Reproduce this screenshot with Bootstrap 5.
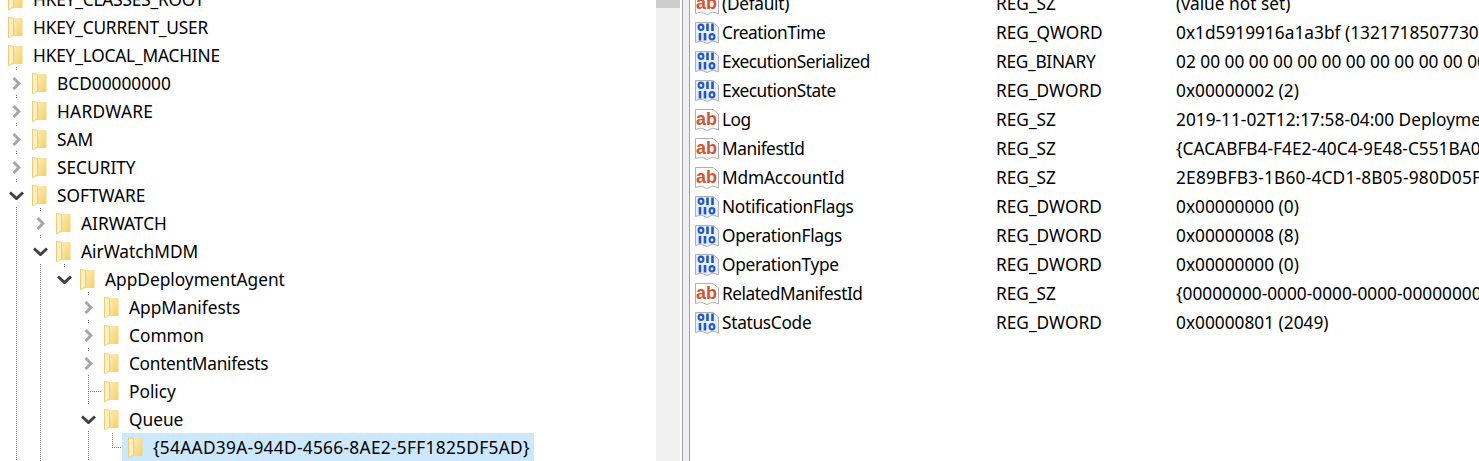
<!DOCTYPE html>
<html lang="en">
<head>
<meta charset="utf-8">
<title>Registry Editor</title>
<link href="https://cdn.jsdelivr.net/npm/bootstrap@5.3.0/dist/css/bootstrap.min.css" rel="stylesheet">
<style>
html,body{height:461px;overflow:hidden;background:#fff}
body{font-family:"Noto Sans","Open Sans",sans-serif;font-size:17.3px;color:#000;line-height:1}
.reg-shell{height:461px;overflow:hidden}
.tree-pane{width:656px;flex:none;position:relative;overflow:hidden;margin-top:-15px;height:476px}
.tree-row{height:28px;white-space:nowrap}
.twisty{width:32px;margin-left:-24px;flex:none;display:flex;justify-content:center;align-items:center}
.fold{width:15px;height:21px;flex:none;margin-right:10px;margin-top:1px}
.lbl{padding-top:2px}
.lv0{padding-left:0}.lv1{padding-left:24px}.lv2{padding-left:48px}.lv3{padding-left:72px}.lv4{padding-left:96px}.lv5{padding-left:120px}
.sel-wrap{background:#cce8ff;height:28px;margin-left:-6px;padding-left:6px;padding-right:4px}
.guides{position:absolute;left:0;top:15px;pointer-events:none}
.scroll-track{width:24px;flex:none;background:#f0f0f0;height:461px}
.scroll-thumb{height:8px;background:#cdcdcd}
.sash{width:8px;flex:none;height:461px;margin-left:2px;border-left:1px solid #a0a0a8;border-right:1px solid #a0a0a8;background:#f0f0f0}
.list-pane{flex:1;margin-top:-11px;min-width:0;overflow:hidden}
.list-row{height:29px;white-space:nowrap}
.list-row .lbl{padding-top:0}
.col-name{width:306px;flex:none;padding-left:5px}
.val-ico{width:24px;height:22px;flex:none;margin-right:3px}
.col-type{width:180px;flex:none}
.col-data{flex:none}
.sq5{letter-spacing:-.47px}
.sq3{letter-spacing:-.3px}
.sq2{letter-spacing:-.18px}
.wd3{letter-spacing:.3px}
.wd2{letter-spacing:.2px}
</style>
</head>
<body>
<svg width="0" height="0" class="position-absolute">
<defs>
<linearGradient id="fg" x1="0" x2="1" y1="0" y2="1"><stop offset="0" stop-color="#fdeeb0"/><stop offset="1" stop-color="#f4cd6c"/></linearGradient>
<symbol id="folder" viewBox="0 0 15 21">
<path d="M5 1H14.500V19H5Z" fill="url(#fg)"/>
<path d="M0.500 0.500L5.500 1.500V18L1.500 20.500H0.500Z" fill="#fdf1c4" stroke="#ebcb78" stroke-width="1"/>
</symbol>
<symbol id="closed" viewBox="0 0 9 13"><path d="M1.500 1L7 6.500L1.500 12" fill="none" stroke="#a6a6a6" stroke-width="3"/></symbol>
<symbol id="open" viewBox="0 0 15 9"><path d="M1 1.500L7.500 7.500L14 1.500" fill="none" stroke="#404040" stroke-width="3"/></symbol>
<symbol id="ab" viewBox="0 0 24 22">
<path d="M0.500 0.500H18L23.500 5V21L18 19L12 21.500L6 19L0.500 20.500Z" fill="#fff" stroke="#b0b0b0"/>
<text x="11.500" y="15.500" text-anchor="middle" font-family="Liberation Sans,sans-serif" font-weight="700" font-size="18" fill="#d9532e">ab</text>
</symbol>
<symbol id="bin" viewBox="0 0 24 22">
<path d="M0.500 0.500H18L23.500 5V21L18 19L12 21.500L6 19L0.500 20.500Z" fill="#e6eefc" stroke="#b0b0b0"/>
<path d="M12.500 1.500V9M17.500 1.500V9M5 11V18.500M10 11V18.500" stroke="#2258c4" stroke-width="2.600" fill="none"/>
<ellipse cx="6" cy="5.300" rx="2.400" ry="2.700" fill="none" stroke="#2258c4" stroke-width="2.100"/>
<ellipse cx="17" cy="14.800" rx="2.400" ry="2.700" fill="none" stroke="#2258c4" stroke-width="2.100"/>
</symbol>
</defs>
</svg>
<div class="reg-shell d-flex">
<div class="tree-pane">
<svg class="guides" width="656" height="461" fill="none" stroke="#777" stroke-dasharray="1 1">
<path d="M16.500 67V71M16.500 95V99M16.500 123V127M16.500 151V155M16.500 179V183M16.500 207V461M40.500 208V212M40.500 235V239M40.500 264V461M64.500 264V268M88.500 292V296M88.500 320V324M88.500 348V352M88.500 375V405M88 391.500H102M88.500 431V461M112.500 433V447M112 447.500H122"/>
</svg>
<div class="tree-row lv0 d-flex align-items-center"><span class="twisty"></span><svg class="fold"><use href="#folder"/></svg><span class="lbl sq2">HKEY_CLASSES_ROOT</span></div>
<div class="tree-row lv0 d-flex align-items-center"><span class="twisty"></span><svg class="fold"><use href="#folder"/></svg><span class="lbl sq2">HKEY_CURRENT_USER</span></div>
<div class="tree-row lv0 d-flex align-items-center"><span class="twisty"></span><svg class="fold"><use href="#folder"/></svg><span class="lbl sq2">HKEY_LOCAL_MACHINE</span></div>
<div class="tree-row lv1 d-flex align-items-center"><span class="twisty"><svg width="9" height="13"><use href="#closed"/></svg></span><svg class="fold"><use href="#folder"/></svg><span class="lbl">BCD00000000</span></div>
<div class="tree-row lv1 d-flex align-items-center"><span class="twisty"><svg width="9" height="13"><use href="#closed"/></svg></span><svg class="fold"><use href="#folder"/></svg><span class="lbl wd3">HARDWARE</span></div>
<div class="tree-row lv1 d-flex align-items-center"><span class="twisty"><svg width="9" height="13"><use href="#closed"/></svg></span><svg class="fold"><use href="#folder"/></svg><span class="lbl">SAM</span></div>
<div class="tree-row lv1 d-flex align-items-center"><span class="twisty"><svg width="9" height="13"><use href="#closed"/></svg></span><svg class="fold"><use href="#folder"/></svg><span class="lbl">SECURITY</span></div>
<div class="tree-row lv1 d-flex align-items-center"><span class="twisty"><svg width="15" height="9"><use href="#open"/></svg></span><svg class="fold"><use href="#folder"/></svg><span class="lbl">SOFTWARE</span></div>
<div class="tree-row lv2 d-flex align-items-center"><span class="twisty"><svg width="9" height="13"><use href="#closed"/></svg></span><svg class="fold"><use href="#folder"/></svg><span class="lbl">AIRWATCH</span></div>
<div class="tree-row lv2 d-flex align-items-center"><span class="twisty"><svg width="15" height="9"><use href="#open"/></svg></span><svg class="fold"><use href="#folder"/></svg><span class="lbl">AirWatchMDM</span></div>
<div class="tree-row lv3 d-flex align-items-center"><span class="twisty"><svg width="15" height="9"><use href="#open"/></svg></span><svg class="fold"><use href="#folder"/></svg><span class="lbl">AppDeploymentAgent</span></div>
<div class="tree-row lv4 d-flex align-items-center"><span class="twisty"><svg width="9" height="13"><use href="#closed"/></svg></span><svg class="fold"><use href="#folder"/></svg><span class="lbl">AppManifests</span></div>
<div class="tree-row lv4 d-flex align-items-center"><span class="twisty"><svg width="9" height="13"><use href="#closed"/></svg></span><svg class="fold"><use href="#folder"/></svg><span class="lbl">Common</span></div>
<div class="tree-row lv4 d-flex align-items-center"><span class="twisty"><svg width="9" height="13"><use href="#closed"/></svg></span><svg class="fold"><use href="#folder"/></svg><span class="lbl sq3">ContentManifests</span></div>
<div class="tree-row lv4 d-flex align-items-center"><span class="twisty"></span><svg class="fold"><use href="#folder"/></svg><span class="lbl">Policy</span></div>
<div class="tree-row lv4 d-flex align-items-center"><span class="twisty"><svg width="15" height="9"><use href="#open"/></svg></span><svg class="fold"><use href="#folder"/></svg><span class="lbl">Queue</span></div>
<div class="tree-row lv5 d-flex align-items-center"><span class="twisty"></span><span class="sel-wrap d-flex align-items-center"><svg class="fold"><use href="#folder"/></svg><span class="lbl wd3">{54AAD39A-944D-4566-8AE2-5FF1825DF5AD}</span></span></div>
</div>
<div class="scroll-track"><div class="scroll-thumb"></div></div>
<div class="sash"></div>
<div class="list-pane">
<div class="list-row d-flex align-items-center"><div class="col-name d-flex align-items-center"><svg class="val-ico"><use href="#ab"/></svg><span class="lbl sq3">(Default)</span></div><div class="col-type lbl">REG_SZ</div><div class="col-data lbl">(value not set)</div></div>
<div class="list-row d-flex align-items-center"><div class="col-name d-flex align-items-center"><svg class="val-ico"><use href="#bin"/></svg><span class="lbl sq5">CreationTime</span></div><div class="col-type lbl">REG_QWORD</div><div class="col-data lbl">0x1d5919916a1a3bf (1321718507730</div></div>
<div class="list-row d-flex align-items-center"><div class="col-name d-flex align-items-center"><svg class="val-ico"><use href="#bin"/></svg><span class="lbl sq5">ExecutionSerialized</span></div><div class="col-type lbl sq3">REG_BINARY</div><div class="col-data lbl">02 00 00 00 00 00 00 00 00 00 00 00 00</div></div>
<div class="list-row d-flex align-items-center"><div class="col-name d-flex align-items-center"><svg class="val-ico"><use href="#bin"/></svg><span class="lbl sq5">ExecutionState</span></div><div class="col-type lbl">REG_DWORD</div><div class="col-data lbl">0x00000002 (2)</div></div>
<div class="list-row d-flex align-items-center"><div class="col-name d-flex align-items-center"><svg class="val-ico"><use href="#ab"/></svg><span class="lbl sq5">Log</span></div><div class="col-type lbl">REG_SZ</div><div class="col-data lbl">2019-11-02T12:17:58-04:00 Deployment</div></div>
<div class="list-row d-flex align-items-center"><div class="col-name d-flex align-items-center"><svg class="val-ico"><use href="#ab"/></svg><span class="lbl sq5">ManifestId</span></div><div class="col-type lbl">REG_SZ</div><div class="col-data lbl">{CACABFB4-F4E2-40C4-9E48-C551BA0</div></div>
<div class="list-row d-flex align-items-center"><div class="col-name d-flex align-items-center"><svg class="val-ico"><use href="#ab"/></svg><span class="lbl sq2">MdmAccountId</span></div><div class="col-type lbl">REG_SZ</div><div class="col-data lbl wd2">2E89BFB3-1B60-4CD1-8B05-980D05F</div></div>
<div class="list-row d-flex align-items-center"><div class="col-name d-flex align-items-center"><svg class="val-ico"><use href="#bin"/></svg><span class="lbl sq3">NotificationFlags</span></div><div class="col-type lbl">REG_DWORD</div><div class="col-data lbl">0x00000000 (0)</div></div>
<div class="list-row d-flex align-items-center"><div class="col-name d-flex align-items-center"><svg class="val-ico"><use href="#bin"/></svg><span class="lbl sq3">OperationFlags</span></div><div class="col-type lbl">REG_DWORD</div><div class="col-data lbl">0x00000008 (8)</div></div>
<div class="list-row d-flex align-items-center"><div class="col-name d-flex align-items-center"><svg class="val-ico"><use href="#bin"/></svg><span class="lbl sq3">OperationType</span></div><div class="col-type lbl">REG_DWORD</div><div class="col-data lbl">0x00000000 (0)</div></div>
<div class="list-row d-flex align-items-center"><div class="col-name d-flex align-items-center"><svg class="val-ico"><use href="#ab"/></svg><span class="lbl sq5">RelatedManifestId</span></div><div class="col-type lbl">REG_SZ</div><div class="col-data lbl">{00000000-0000-0000-0000-00000000</div></div>
<div class="list-row d-flex align-items-center"><div class="col-name d-flex align-items-center"><svg class="val-ico"><use href="#bin"/></svg><span class="lbl sq3">StatusCode</span></div><div class="col-type lbl">REG_DWORD</div><div class="col-data lbl">0x00000801 (2049)</div></div>
</div>
</div>
</body>
</html>
